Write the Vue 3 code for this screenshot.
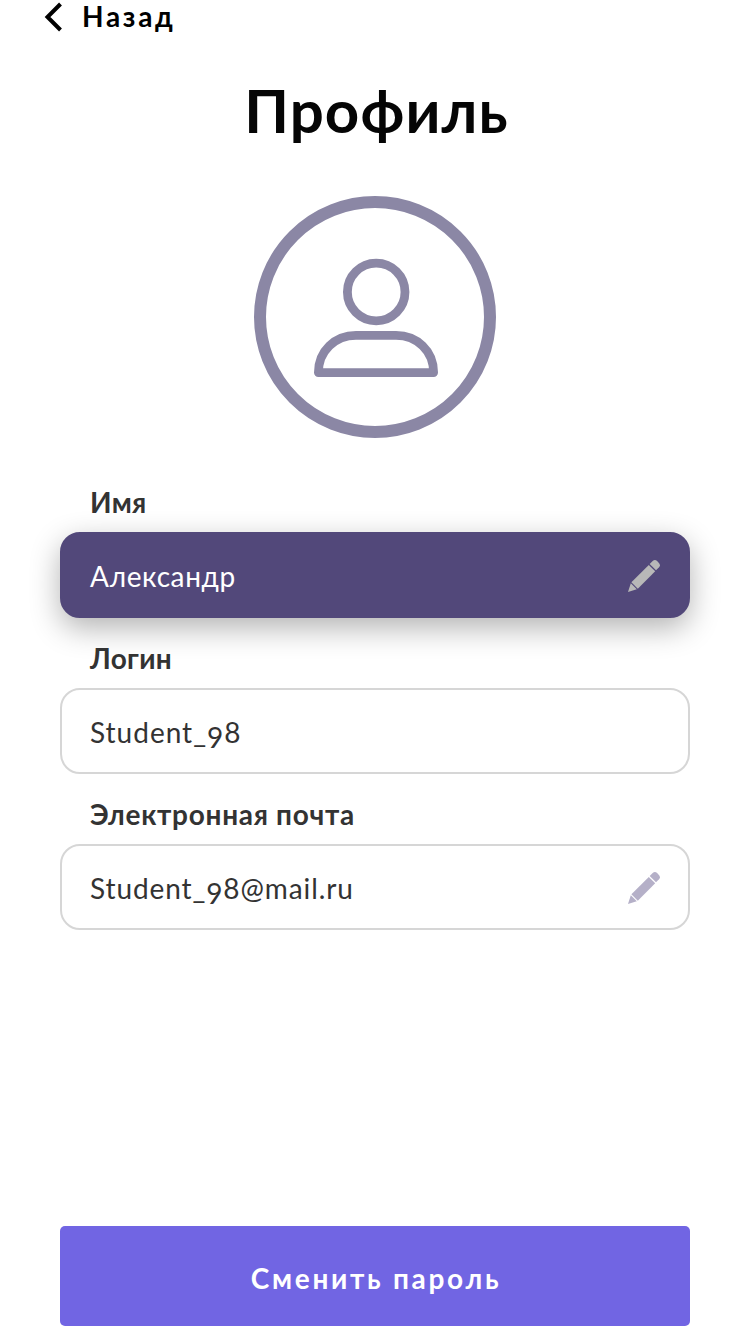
<script setup>
const fields = [
  { key: 'name', label: 'Имя', parts: ['Александр'], editable: true, active: true },
  { key: 'login', label: 'Логин', parts: ['Student_', '9', '8'], editable: false, active: false },
  { key: 'mail', label: 'Электронная почта', parts: ['Student_', '9', '8@mail.ru'], editable: true, active: false },
]
</script>

<template>
  <main class="screen">
    <a class="back">
      <svg class="chevron" width="20" height="30" viewBox="0 0 20 30">
        <path d="M17.5 2 L4.5 15 L17.5 28" fill="none" stroke="#000" stroke-width="4" />
      </svg>
      <span class="back-text">Назад</span>
    </a>
    <h1 class="title"><span>Профиль</span></h1>
    <svg class="avatar" width="242" height="242" viewBox="0 0 242 242" fill="none" stroke="#8b87a5">
      <circle cx="121" cy="121" r="115" stroke-width="12" />
      <circle cx="122.2" cy="96" r="28.8" stroke-width="8.8" />
      <path d="M64.4 176.6 C64.4 155 81 139.4 102 139.4 H142 C163 139.4 179.6 155 179.6 176.6 Z" stroke-width="8.8" stroke-linejoin="round" />
    </svg>
    <section class="fields">
      <div v-for="f in fields" :key="f.key" class="field" :class="[f.key, { active: f.active }]">
        <div class="label">{{ f.label }}</div>
        <div class="box">
          <span class="value"><span v-for="(p, i) in f.parts" :key="i" :class="{ oldstyle: p === '9' }">{{ p }}</span></span>
          <svg v-if="f.editable" class="pencil" width="32" height="32" viewBox="0 0 32 32" fill="currentColor">
            <path d="M0 32 L2.8 23.2 L8.8 29.2 Z" />
            <path d="M3.4 22.3 L20.8 4.9 L27.2 11.3 L9.8 28.7 Z" />
            <path d="M21.7 4 L24.7 1 Q26.9 -1 29.1 1.1 L30.9 2.9 Q33 5.1 31 7.3 L28 10.3 Z" />
          </svg>
        </div>
      </div>
    </section>
    <button class="submit"><span>Сменить пароль</span></button>
  </main>
</template>

<style>
body {
  margin: 0;
  background: #fff;
}
</style>

<style scoped>
.screen {
  box-sizing: border-box;
  width: 750px;
  height: 1326px;
  padding: 0 60px;
  display: flex;
  flex-direction: column;
  overflow: hidden;
  font-family: Lato, "Open Sans", sans-serif;
  color: #333;
}
.back {
  display: flex;
  align-items: center;
  gap: 19px;
  height: 34px;
  margin-left: -17px;
  color: #000;
  font-size: 28px;
  font-weight: 700;
  letter-spacing: 2.7px;
}
.back-text {
  padding-bottom: 2px;
}
.title {
  margin: 36px 0 0;
  height: 80px;
  line-height: 80px;
  padding-left: 3px;
  text-align: center;
  font-size: 60px;
  font-weight: 700;
  letter-spacing: 1.1px;
  color: #050505;
}
.avatar {
  align-self: center;
  flex: none;
  margin-top: 46px;
}
.fields {
  margin-top: 42px;
}
.label {
  height: 52px;
  line-height: 44px;
  padding-left: 30px;
  font-size: 28px;
  font-weight: 700;
  letter-spacing: 0.3px;
}
.mail .label {
  letter-spacing: 0.7px;
}
.box {
  box-sizing: border-box;
  height: 86px;
  padding: 2px 28px 0;
  display: flex;
  align-items: center;
  justify-content: space-between;
  border: 2px solid #d6d6d6;
  border-radius: 20px;
  font-size: 28px;
  letter-spacing: 1px;
}
.name .box {
  letter-spacing: 0.6px;
}
.mail .box {
  letter-spacing: 0.9px;
}
.oldstyle {
  line-height: 0;
  vertical-align: -5px;
}
.field + .field {
  margin-top: 18px;
}
.pencil {
  color: #b5b0c8;
}
.active .box {
  background: #52487a;
  border-color: #52487a;
  color: #fff;
  box-shadow: 0 10px 30px rgba(0, 0, 0, 0.3);
}
.active .pencil {
  color: #b8b8b8;
}
.submit {
  margin: auto 0 0;
  padding: 3px 0 0 2px;
  height: 100px;
  flex: none;
  border: 0;
  border-radius: 5px;
  background: #7165e3;
  color: #fff;
  font-family: inherit;
  font-size: 28px;
  font-weight: 700;
  letter-spacing: 2.7px;
}
</style>
